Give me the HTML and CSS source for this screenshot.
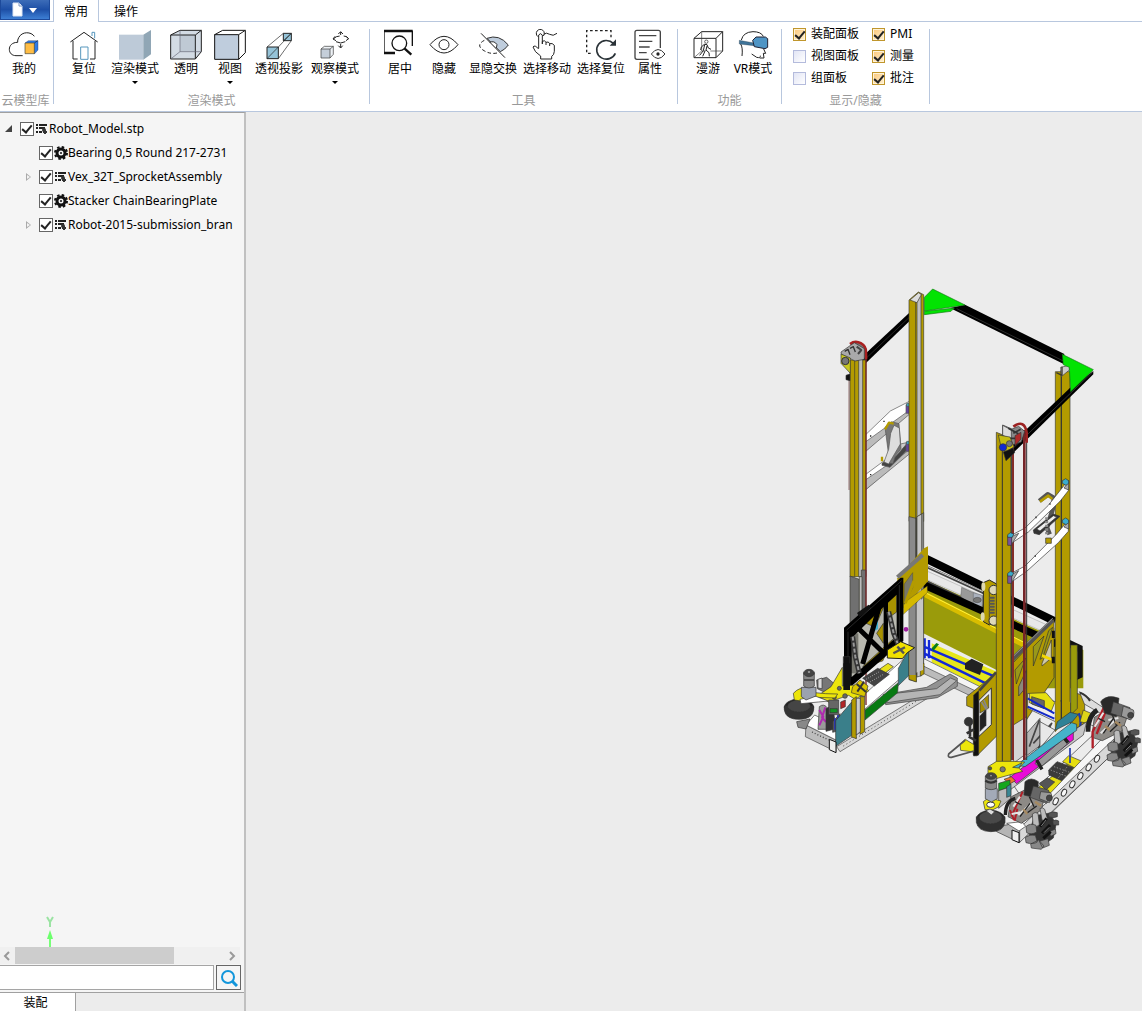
FILE: index.html
```html
<!DOCTYPE html>
<html lang="zh-CN">
<head>
    <meta charset="UTF-8">
    <meta name="viewport" content="width=device-width, initial-scale=1.0">
    <title>Robot_Model.stp</title>
    <link rel="stylesheet" href="styles.css">
</head>
<body>
    <svg class="defs" width="0" height="0" aria-hidden="true">
        <symbol id="i-asm" viewBox="0 0 12 12">
            <path d="M0 2h2M3 2h8M0 5h2M3 5h6M0 9h2M3 9h3" stroke="#222" stroke-width="2"/>
            <circle cx="8" cy="7" r="2" fill="#333"/><path d="M7 9h4M9 7v4" stroke="#333" stroke-width="2"/>
        </symbol>
        <symbol id="i-part" viewBox="0 0 28 28">
            <circle cx="14" cy="14" r="12" fill="none" stroke="#111" stroke-width="4" stroke-dasharray="5 4.425"/>
            <circle cx="14" cy="14" r="8" fill="none" stroke="#111" stroke-width="6"/>
            <circle cx="14" cy="14" r="2" fill="#111"/>
        </symbol>
    </svg>

    <header class="tabs">
        <button class="app-button" aria-label="文件">
            <svg width="30" height="16" viewBox="0 0 30 16"><path d="M1 1h6l3 3v10H1z" fill="#fff" stroke="#dde6f5"/><path d="M7 1v3h3" fill="none" stroke="#7d95c0"/><path d="M17 6h8l-4 5z" fill="#fff"/></svg>
        </button>
        <button class="tab active">常用</button>
        <button class="tab">操作</button>
    </header>

    <nav class="ribbon">
        <section class="group cloud">
            <div class="tools">
                <button class="tool">
                    <svg viewBox="0 0 96 96"><path d="M79 22C70 8 42 6 32 26q-4 7-3 14C12 40 4 50 4 61s8 19 20 19h20" class="ln"/><path d="M51 42l10-7h29v28l-11 12z" fill="#2f7be6" stroke="#223"/><path d="M51 42h28v32H51z" fill="#ffbd45" stroke="#443" stroke-width="2"/><path d="M79 42l10-7" stroke="#223" stroke-width="2"/></svg>
                    <span>我的</span>
                </button>
            </div>
            <h2>云模型库</h2>
        </section>

        <section class="group render">
            <div class="tools">
                <button class="tool">
                    <svg viewBox="0 0 96 96"><path d="M7 39L48 10l41 29M15 36v54h14M81 36v54H66" class="ln"/><path d="M38 91V54h22v37zM72 21V10h8v18" fill="none" stroke="#5797bd" stroke-width="3"/></svg>
                    <span>复位</span>
                </button>
                <button class="tool drop">
                    <svg viewBox="0 0 96 96"><path d="M0 17h73v75H0z" fill="#bdcad8"/><path d="M73 17L96 3v73L73 92z" fill="#90a6b5"/></svg>
                    <span>渲染模式</span><i class="arrow"></i>
                </button>
                <button class="tool">
                    <svg viewBox="0 0 96 96"><path d="M2 18L30 4h64v64L76 90H2z" fill="#d3dbe4"/><path d="M30 18h46v50H30z" fill="#bfc9d4"/><path d="M2 18h74v72H2zM2 18L30 4h64v64L76 90M76 18L94 4" class="ln"/><path d="M30 4v64h64M30 68L2 90" fill="none" stroke="#667" stroke-width="2"/></svg>
                    <span>透明</span>
                </button>
                <button class="tool">
                    <svg viewBox="0 0 96 96"><path d="M2 17L26 4h68v67L74 91z" fill="#fff" class="ln3"/><path d="M2 17h72v74H2z" fill="#bfcddd" stroke="#111" stroke-width="3"/><path d="M74 17L94 4" class="ln"/></svg>
                    <span>视图</span><i class="arrow"></i>
                </button>
                <button class="tool wide">
                    <svg viewBox="0 0 96 96"><path d="M61 13h24v22H61zM12 54h34v35H12z" fill="#95c3d8" stroke="#222" stroke-width="3"/><path d="M12 54l49-41M46 54l39-41M46 89l39-54M61 35l24-22M12 89l34-35" fill="none" stroke="#222" stroke-width="2"/></svg>
                    <span>透视投影</span>
                </button>
                <button class="tool wide drop">
                    <svg viewBox="0 0 96 96"><path d="M6 60l10-8h27v24L33 87z" fill="#eef2f6" stroke="#333" stroke-width="2"/><path d="M6 60h27v27H6z" fill="#c5ced9" stroke="#333" stroke-width="2"/><path d="M33 60l10-8" stroke="#333" stroke-width="2"/><path d="M58 15l7-7 7 7M65 9v9M48 22l-6 8 9 5M43 30q8-9 19-9M82 22l7 7-8 6M88 29q-7-9-14-8M58 50l7 7 6-7M65 56V45M51 38q14 8 28 0" fill="none" stroke="#222" stroke-width="3"/></svg>
                    <span>观察模式</span><i class="arrow"></i>
                </button>
            </div>
            <h2>渲染模式</h2>
        </section>

        <section class="group">
            <div class="tools">
                <button class="tool">
                    <svg viewBox="4 0 92 96"><path d="M2 74V7h85v44" fill="none" stroke="#111" stroke-width="4"/><path d="M1 6h87M2 72h33" stroke="#111" stroke-width="7"/><circle cx="48" cy="43" r="22" fill="none" stroke="#111" stroke-width="4"/><path d="M64 59l20 18" stroke="#111" stroke-width="7"/></svg>
                    <span>居中</span>
                </button>
                <button class="tool">
                    <svg viewBox="0 0 96 96"><path d="M6 47q42-50 84 0-42 50-84 0z" class="ln"/><circle cx="48" cy="47" r="15" class="ln"/></svg>
                    <span>隐藏</span>
                </button>
                <button class="tool wide">
                    <svg viewBox="0 0 96 96"><path d="M30 28q36-14 64 20-10 14-24 20z" fill="#bfcddd" stroke="#333" stroke-width="3"/><path d="M38 40q14-6 22 7l-2 10" fill="#fff" stroke="#333" stroke-width="3"/><path d="M22 34Q-4 48 18 63t46 8" fill="none" stroke="#222" stroke-width="3" stroke-dasharray="11 7"/><path d="M12 13l72 73" stroke="#222" stroke-width="3"/></svg>
                    <span>显隐交换</span>
                </button>
                <button class="tool wide">
                    <svg viewBox="0 0 96 96"><path d="M21 23a12 12 0 1 1 16-2M38 16q8-7 18 0t22-3" class="ln"/><path d="M23 58V18q5-8 11 0v27-8q7-5 11 3 8-4 11 4 8-3 14 5v18q-1 12-8 15v8H29v-9Q10 69 6 54q5-8 17 6M45 40v8M56 44v7" class="ln"/></svg>
                    <span>选择移动</span>
                </button>
                <button class="tool wide">
                    <svg viewBox="0 0 96 96"><path d="M17 73H5V5h73v22" fill="none" stroke="#222" stroke-width="4" stroke-dasharray="8 7"/><path d="M85 43A29 28 0 1 0 91 73" fill="none" stroke="#2b3338" stroke-width="5"/><path d="M93 31v19H74z" fill="#2b3338"/></svg>
                    <span>选择复位</span>
                </button>
                <button class="tool">
                    <svg viewBox="0 0 96 96"><path d="M44 91H9q-6 0-6-6V10q0-6 6-6h64q6 0 6 6v47" fill="none" stroke="#444" stroke-width="4"/><path d="M15 20h52M15 37h40M15 54h32M15 71h23" stroke="#444" stroke-width="4"/><path d="M52 75q20-27 41 0-21 27-41 0z" fill="#fff" stroke="#333" stroke-width="3"/><circle cx="72" cy="75" r="5" fill="#222"/></svg>
                    <span>属性</span>
                </button>
            </div>
            <h2>工具</h2>
        </section>

        <section class="group">
            <div class="tools">
                <button class="tool">
                    <svg viewBox="0 0 96 96"><path d="M6 28h66v58H6zM6 28L29 8h63v58L72 86M72 28L92 8" class="ln"/><path d="M29 8v58M29 66h10M55 66h37M29 66L6 86" fill="none" stroke="#444" stroke-width="2"/><circle cx="43" cy="38" r="5" class="ln thin"/><path d="M37 46l-9 8-2 9M37 46l8 1 4 10 8 4M38 47l-4 18-11 14M45 51l-3 12 9 8 1 11M40 64l-8 18" fill="none" stroke="#222" stroke-width="3"/></svg>
                    <span>漫游</span>
                </button>
                <button class="tool vr">
                    <svg viewBox="0 0 96 96"><path d="M13 33Q19 9 48 8q24 0 31 14M11 45q7 11 4 36M70 80q1 8-11 5l-15-10M80 60l6 13h-7l2 14H68" class="ln"/><path d="M7 34l44 8v8L7 45z" fill="#3f7499" stroke="#234"/><path d="M47 34l10-10h28l7 5v26l-8 4-32-6z" fill="#4f95c5" stroke="#223" stroke-width="3"/></svg>
                    <span>VR模式</span>
                </button>
            </div>
            <h2>功能</h2>
        </section>

        <section class="group panels">
            <div class="checks">
                <label><input type="checkbox" checked>装配面板</label>
                <label><input type="checkbox" checked>PMI</label>
                <label><input type="checkbox">视图面板</label>
                <label><input type="checkbox" checked>测量</label>
                <label><input type="checkbox">组面板</label>
                <label><input type="checkbox" checked>批注</label>
            </div>
            <h2>显示/隐藏</h2>
        </section>
    </nav>

    <main class="workspace">
        <aside class="sidebar">
            <div class="tree-panel">
                <ul class="tree">
                    <li>
                        <div class="row"><i class="twisty open"></i><input type="checkbox" id="n1" checked><svg><use href="#i-asm"/></svg><label for="n1">Robot_Model.stp</label></div>
                        <ul>
                            <li class="row"><i class="twisty none"></i><input type="checkbox" id="n2" checked><svg class="part"><use href="#i-part"/></svg><label for="n2">Bearing 0,5 Round 217-2731</label></li>
                            <li class="row"><i class="twisty"></i><input type="checkbox" id="n3" checked><svg><use href="#i-asm"/></svg><label for="n3">Vex_32T_SprocketAssembly</label></li>
                            <li class="row"><i class="twisty none"></i><input type="checkbox" id="n4" checked><svg class="part"><use href="#i-part"/></svg><label for="n4">Stacker ChainBearingPlate</label></li>
                            <li class="row"><i class="twisty"></i><input type="checkbox" id="n5" checked><svg><use href="#i-asm"/></svg><label for="n5">Robot-2015-submission_bran</label></li>
                        </ul>
                    </li>
                </ul>
                <svg class="triad" width="40" height="32" viewBox="0 0 40 32"><path d="M17 2l3 5 3-5M20 7v5" fill="none" stroke="#9be3a3" stroke-width="2"/><path d="M20 20v12" stroke="#7f7" stroke-width="2"/><path d="M20 15l3 9h-6z" fill="#6dff6d"/></svg>
            </div>
            <div class="hscroll">
                <svg width="15" height="17" viewBox="0 0 15 17"><path d="M9 5L5 9l4 4" fill="none" stroke="#999" stroke-width="2"/></svg>
                <span class="thumb"></span>
                <svg width="15" height="17" viewBox="0 0 15 17"><path d="M5 5l4 4-4 4" fill="none" stroke="#999" stroke-width="2"/></svg>
            </div>
            <div class="search">
                <input type="text" aria-label="搜索">
                <button aria-label="搜索"><svg width="18" height="18" viewBox="0 0 18 18"><circle cx="8" cy="8" r="6" fill="none" stroke="#1296db" stroke-width="2"/><path d="M12 12l5 5" stroke="#1296db" stroke-width="3"/></svg></button>
            </div>
            <div class="bottom-tabs"><button>装配</button></div>
        </aside>

        <section class="viewport">
            <svg class="model" width="362" height="580" viewBox="0 0 1086 1740" stroke-linejoin="round">
                <!-- top beams -->
                <g>
                    <path d="M240 236L388 98v26L240 266z"/><path d="M242 250L388 112" stroke="#777" stroke-width="1"/>
                    <path d="M510 84l45-10 298 148-2 30z"/><path d="M530 86l322 158" stroke="#888" stroke-width="1"/>
                </g>
                <!-- intake arms on the left -->
                <g stroke="#555" stroke-width="2">
                    <path d="M256 465l75-72 57-29v27L256 515z" fill="#fff"/><path d="M256 486L388 391v12L256 515z" fill="#bbb"/>
                    <path d="M256 584l132-98v28L256 630z" fill="#fff"/><path d="M256 600l132-90v12L256 630z" fill="#bbb"/>
                    <path d="M270 468h4M310 424h4M270 584h4" stroke="#222" stroke-width="4"/>
                    <path d="M306 550l82-64v18l-58 58-24-6z" fill="#444"/><path d="M318 545l30-50 36-8-54 62z" fill="#ccc"/>
                    <path d="M315 442l20-17 22 6 6 75-16 20-8 25-24-3 10-30z" fill="#777"/><path d="M332 460l10-24 16 8 3 48-35 60-14-6 14-38z" fill="#ddd"/>
                    <path d="M315 448l12-20 14 3M306 530v14" fill="none" stroke="#b39b00" stroke-width="7"/>
                    <path d="M378 374h10v26h-10zM378 488h10v26h-10z" fill="#63429d"/><path d="M380 370h8v9h-8zM380 484h8v9h-8z" fill="#3bb0d0"/>
                </g>
                <!-- back panel and cross bars -->
                <g transform="translate(0 660)">
                    <path d="M430 415l220 115v60L430 470z" fill="#eee"/>
                    <path d="M455 430l195 85v70l-195-98z" fill="#e6e619"/>
                    <path d="M432 440l218 92M432 460l218 106M434 415v60M447 420v55" fill="none" stroke="#1228d8" stroke-width="7"/>
                    <path d="M555 490l20-14 35 17-10 32-45-18z" fill="#222"/>
                    <path d="M455 445l14-16 8 4-17 20z" fill="#087c1a"/>
                    <path d="M425 235l485 215v115H760L430 400z" fill="#9a9b0b"/>
                    <path d="M434 210l390 175v25L434 236z" fill="#e8e8e8" stroke="#777"/>
                    <path d="M425 238l200 95M440 200l185 85" stroke="#444" stroke-width="9"/><path d="M440 198l180 82" stroke="#ccc" stroke-width="3"/>
                    <path d="M545 262l62 28v44l-65-44z" fill="#999" stroke="#333"/><path d="M580 278l27 8v45l-27-12z" fill="#aab1bd" stroke="#444"/><ellipse cx="592" cy="300" rx="12" ry="8" fill="#777" stroke="#222"/>
                    <path d="M430 172l395 192" stroke="#000" stroke-width="24"/>
                    <path d="M430 254l400 178" stroke="#000" stroke-width="22"/>
                    <path d="M436 284l370 188" stroke="#d9bd00" stroke-width="16"/><path d="M440 280l365 184" stroke="#fff33a" stroke-width="3"/>
                    <path d="M870 420l38 18v94l-18 8-20-10z" fill="#111"/><path d="M870 443l22 12v80h-22z" fill="#9a9b0b" stroke="#333"/>
                    <path d="M610 248l18-8 22 12v115l-22 8-18-10z" fill="#b39b00" stroke="#222" stroke-width="3"/><path d="M628 268v105" stroke="#222" stroke-width="2"/>
                    <circle cx="641" cy="270" r="14" fill="#ded8b8" stroke="#333" stroke-width="3"/><circle cx="641" cy="362" r="14" fill="#ded8b8" stroke="#333" stroke-width="3"/><ellipse cx="610" cy="260" rx="6" ry="13" fill="#ddd8b0"/><ellipse cx="608" cy="350" rx="6" ry="13" fill="#ddd8b0"/>
                    <path d="M636 290v52" stroke="#555" stroke-width="16" stroke-dasharray="6 3"/>
                </g>
                <!-- left and rear base rails -->
                <g transform="translate(0 1110)" stroke="#444" stroke-width="2">
                    <path d="M430 25l220 110v30L430 50z" fill="#f4f4f4"/><path d="M430 48l220 105v22L430 70z" fill="#bbb"/>
                    <path d="M170 290l310-190 20 10-320 195z" fill="#d8d8d8"/><path d="M190 288l285-175" stroke-dasharray="3 8" stroke-width="3"/>
                    <path d="M310 134l130-22 70-40 22 12v25l-60 34-155 21z" fill="#929292"/><path d="M310 134l160-18 42-32 18 8-50 42-165 25z" fill="#b5b5b5"/>
                    <path d="M190 190l200-180v50L240 190z" fill="#fff"/><path d="M255 180l100-82-2 30-98 82z" fill="#087a12"/><path d="M355 55l33-58v78l-33 32z" fill="#3a7f8a"/>
                    <path d="M78 225l90 45v35l-92-45z" fill="#bdbdbd"/><path d="M78 225l26-30 92 45-28 30z" fill="#fff"/><path d="M96 246l50 24" stroke-dasharray="3 6" stroke-width="4"/>
                </g>
                <!-- lift posts -->
                <g stroke="#3b3b30" stroke-width="2">
                    <path d="M210 240h48v650h-48z" fill="#b39b00"/><path d="M236 240l12-10v660h-12z" fill="#bbb"/><path d="M210 888l28 10v180h-28zM244 870h14v210h-14z" fill="#707070"/><path d="M238 890h8v190h-8z" fill="#bbb"/><path d="M224 240v650" />
                    <path d="M258 225v1050" stroke="#762528" stroke-width="4"/><path d="M207 300v330" stroke="#633" stroke-width="2"/>
                    <path d="M387 60l28-24 16 8v680H387z" fill="#b39b00"/><path d="M411 66l12-24v670h-12z" fill="#bfbfbf"/><path d="M390 60l26-22 8 6-13 24z" fill="#ddd"/>
                    <path d="M387 710l22 5v490l-22-6zM409 712l22-14v480l-22 12z" fill="#8a8a8a"/><path d="M411 710l14-8v485l-14 4z" fill="#c6c6c6"/><path d="M387 1100l22 8v98l-22-8zM421 1150h11v32l-11 6z" fill="#b39b00"/><path d="M407 66v1080" />
                    <path d="M826 275h44v1015l-44 65z" fill="#b39b00"/><path d="M844 270v1060" stroke-width="4"/><path d="M842 262l26-6v14l-24 20z" fill="#ccc"/><path d="M829 278l17 8v-26" fill="none" stroke-width="4"/>
                </g>
                <!-- left tower head -->
                <g transform="translate(150 0)" stroke="#333" stroke-width="2">
                    <path d="M60 192a30 30 0 0 1 48 26v20" fill="#777" stroke="#a92020" stroke-width="8"/>
                    <path d="M33 216l40-28 30 18v32l-28 5-41-20z" fill="#aaa"/><path d="M44 214l10-6 6 16M60 205l10-5 6 16" fill="none" stroke-width="4"/><path d="M80 200l14 10-10 12" fill="none" stroke="#444" stroke-width="6"/>
                    <path d="M33 222l28 12v46l-28-30z" fill="#c8c820"/><circle cx="46" cy="243" r="11" fill="#777" stroke-width="3"/><path d="M48 286l12-4v20l-12-3z" fill="#111"/>
                </g>
                <!-- green corner plates -->
                <g transform="translate(150 0)" stroke="#147a14" stroke-width="2" fill="#02e302">
                    <path d="M283 52l25-25 97 48-122 18z"/><path d="M283 94l90-10-10 10-80 10z"/>
                    <path d="M719 325L520 514l8 26L790 283v-10z" fill="#000" stroke="none"/><path d="M528 525L788 276" stroke="#999" stroke-width="1"/>
                    <path d="M697 223l93 46-68 66-4-73-18-8z"/>
                </g>
                <!-- left black gate and its linkage -->
                <g transform="translate(0 660)">
                    <path d="M352 235l80-90 12-6v105l-92 100z" fill="#b39b00"/><path d="M370 310l72-52v20l-72 65z" fill="#d5b900" stroke="#333"/>
                    <path d="M373 252l25-34v45l-25 50z" fill="#77776b" stroke="#333"/><path d="M376 310l26-68" stroke="#b39b00" stroke-width="9"/>
                    <path d="M352 232l76-67" stroke="#777" stroke-width="12"/>
                    <path d="M388 330l20-20v215h-20z" fill="#8a8a8a"/><path d="M409 310l20-15v215l-20 8z" fill="#c6c6c6"/><path d="M408 310v215" stroke="#333" stroke-width="2"/>
                    <path d="M205 400l155-130v160L210 560z" fill="#b9b9b0"/><path d="M210 400h25v120h-25z" fill="#77776f"/>
                    <path d="M248 365l65-48-28 65zM248 500l90-82-30 65zM290 400l20-30v60zM322 300l28-24v60l-28 20z" fill="#a89200" stroke="#333" stroke-width="2"/>
                    <path d="M280 395l14-34v26z" fill="#42b2d2"/>
                    <path d="M192 383l170-150h8v190L215 558l-4 25h-19zM215 414v117l96-84V320zM324 308v126l26-24V284z" fill-rule="evenodd"/>
                    <path d="M235 385l82 80M248 492l50-172" fill="none" stroke="#000" stroke-width="15"/><path d="M235 345l35-25" stroke="#111" stroke-width="14"/>
                    <path d="M200 390l165-148M204 395v180M358 255v165" fill="none" stroke="#777" stroke-width="1"/>
                    <path d="M326 335l15 65 18 45M218 410l8 60 12 50" fill="none" stroke="#333" stroke-width="15"/><path d="M326 335l15 65 18 45M218 410l8 60 12 50" fill="none" stroke="#999" stroke-width="6" stroke-dasharray="12 6"/>
                    <path d="M322 450l40-25 42 18-22 15-15 18-45-2z" fill="#f0e000" stroke="#222" stroke-width="3"/><path d="M340 460l35-18M352 440l20 20" stroke="#555" stroke-width="7"/>
                    <circle cx="378" cy="388" r="7" fill="#a020a0"/>
                </g>
                <!-- left drive pod -->
                <g transform="translate(0 1110)" stroke="#333" stroke-width="2">
                    <path d="M292 62l32-22 16 10-32 25z" fill="#e7e016"/><path d="M248 85l45-30 35 18-45 35z" fill="#444"/><path d="M258 88l42-24M270 96l42-24" stroke="#ccc" stroke-dasharray="3 4"/>
                    <path d="M110 90l30-8 24 20-24 28-28-14z" fill="#777"/><path d="M114 88l12-4v32l-12-2z" fill="#ddd"/>
                    <path d="M190 20h20v100h-20z" fill="#111"/>
                    <path d="M153 110l34-58v56l65-5 14 20-40 25-20-12-60 20-34-18z" fill="#ece50b"/>
                    <path d="M190 40h20v80h-20z" fill="#111" stroke="none"/>
                    <circle cx="178" cy="115" r="6" fill="#666"/><circle cx="195" cy="138" r="7" fill="#666"/><circle cx="163" cy="142" r="6" fill="#666"/>
                    <path d="M218 110l22-20 24 18-10 32-40-12z" fill="#d9c400"/><path d="M230 102l28 24M232 125l20-30" stroke-width="6"/>
                    <path d="M118 170q14-12 26 6v62h-30z" fill="#9a9a9a"/><path d="M118 180l12 20-12 26M136 172l-10 30 12 14" fill="none" stroke="#b02ab0" stroke-width="6"/><path d="M138 176l20-10 10 70-30 8z" fill="#333"/><path d="M146 150h30v44h-30z" fill="#666"/><path d="M182 156l14-6v20l-14 6z" fill="#b32626"/><path d="M150 176h22v12h-22z" fill="#119222"/><path d="M158 215l22-24v50l-22 6z" fill="#555"/><path d="M165 205v34M174 195v30" stroke="#2433bd" stroke-width="5"/>
                    <path d="M167 212l48-56v100l-48 33z" fill="#3a7f8a"/><path d="M215 150l14-10v126l-14-5zM240 140h14v105l-14 8z" fill="#b39b00"/><path d="M229 145h12v100l-12 10z" fill="#ccc"/>
                    <path d="M148 268l20 8v32l-20-9z" fill="#eee" stroke="#111" stroke-width="3"/>
                    <path d="M50 215l40-8-12 30-24-5z" fill="#888"/>
                    <ellipse cx="57" cy="172" rx="44" ry="25" fill="#222"/><path d="M13 168v12q4 28 44 28t44-28v-12z" fill="#333"/><ellipse cx="57" cy="168" rx="34" ry="18" fill="#454545" stroke-dasharray="4 4"/>
                    <path d="M40 130q20-22 45-14l20 12q30 4 68 4l-8 12-58-2-24 14-40-6z" fill="#ece50b"/><path d="M60 148l45-10 40 15-30 3-52 5z" fill="#fff"/>
                    <path d="M64 112h44v26l-30 12-14-10z" fill="#9ba2af"/><path d="M71 68h32v40q-16 12-32 0z" fill="#888"/><ellipse cx="87" cy="69" rx="16" ry="11" fill="#444"/><circle cx="87" cy="66" r="4" fill="#ccc"/>
                    <path d="M72 90h30" stroke-width="4"/>
                </g>
                <!-- right middle frame -->
                <g transform="translate(0 660)" stroke="#333" stroke-width="2">
                    <path d="M700 488l122-130v175L700 720z" fill="#b39b00"/>
                    <path d="M760 440l32-32-32 90zM806 392l12-10-30 92-8 4z" fill="#99981a"/><path d="M786 490l28-70v54l-28 24z" fill="#cfc9a8"/><path d="M786 462l28 12v8l-28-10z" fill="#f2d800" stroke="none"/>
                    <path d="M705 510l32-36-28 78z" fill="#99981a"/><path d="M716 560l22-48v50l-22 26z" fill="#8a8a7a"/>
                    <path d="M697 478l122-118" stroke="#555" stroke-width="13"/><path d="M697 472l122-118" stroke="#aaa"/><path d="M820 392v22M820 470v20" stroke="#111" stroke-width="9"/>
                </g>
                <g transform="translate(0 1110)" stroke="#333" stroke-width="2">
                    <path d="M743 130l83 25v60l-83-40z" fill="#f0eeee"/><path d="M748 130l50-2 26 30-10 25-66-25z" fill="#e5df10"/><path d="M755 140l38 12v24l-38-14z" fill="#666"/><path d="M743 145l80 45M743 170l80 36" stroke="#1228c8" stroke-width="6"/>
                    <path d="M560 140l90-72v190l-60 60-10-3V175l-20-8z" fill="#b39b00"/><path d="M596 152l38-38v110l-38 36z" fill="#e9e9e9" stroke-width="3"/><path d="M600 158l26-24v40l-26 15z" fill="#a28c00"/><path d="M600 198l18-20v48l-18 18z" fill="#222"/><path d="M612 150l10 26M605 156l15 24" stroke="#888" stroke-width="5"/>
                    <path d="M581 135l15-13v193l-15 3z" fill="#111"/><path d="M598 122l50-55" stroke="#444" stroke-width="8"/>
                    <circle cx="566" cy="215" r="13" fill="#333"/><path d="M570 210v48M560 250l22-12M566 260l22 12" stroke-width="8"/>
                    <path d="M540 282l16-14 26 16v22l-40-5z" fill="#ece50b"/><path d="M556 270l-50 42q-4 11 8 10l68-19" fill="none" stroke="#555" stroke-width="5"/>
                    <path d="M700 225l40-25v110l-40 30z" fill="#d5d5d5"/><path d="M740 250l40-45v82l-40 30z" fill="#b5b5b5"/><path d="M748 290l30-80M760 280l55-60-40 75" fill="none" stroke="#444" stroke-width="5"/><path d="M780 215l45 25-45 55z" fill="#e8e8e8"/>
                    <path d="M872 160l20-30 22 10v80l-42 25z" fill="#b39b00"/><path d="M872 -15h20v190l-20 20z" fill="#9a9b0b"/><path d="M826 155h44v35l-44 55z" fill="#b39b00" stroke="none"/><path d="M844 150v75" stroke-width="4"/>
                    <path d="M832 215l38-28 25 6-18 22-52 26z" fill="#2f8296"/>
                    <path d="M896 190q12 25 0 60" fill="none" stroke="#2038ad" stroke-width="7"/>
                    <path d="M898 125l75 50v22l-60-35z" fill="#ddd"/><path d="M900 128q20 8 30 25" fill="none" stroke-width="6"/><path d="M910 180l35 15-25 25-20-5z" fill="#ddd518"/>
                </g>
                <!-- right base rails -->
                <g transform="translate(0 1110)" stroke="#333" stroke-width="2">
                    <path d="M690 390l230-170 40 15-230 215z" fill="#efefef"/><path d="M690 370l230-155-10 40-220 165z" fill="#c6c6c6"/>
                    <path d="M735 445l130-105 35 15-120 125z" fill="#e6df10"/><path d="M848 335l18-18 38 16-18 22z" fill="#e6df10"/>
                    <path d="M806 360l25-25 50 18-34 40-40-18z" fill="#3b3b3b"/><path d="M812 360l50 20M822 350l50 18M830 390l32-40" stroke="#bbb" stroke-dasharray="4 5"/>
                    <path d="M778 400l24-16 22 12-26 24z" fill="#555"/><path d="M870 294v45" stroke="#2038ad" stroke-width="5"/>
                    <path d="M720 525L1005 225l20 20v40L740 560z" fill="#f6f6f6"/><path d="M718 535L1020 250v40L718 578z" fill="#d8d8d8"/>
                    <g fill="#f8f8f8" stroke-width="3"><ellipse cx="827" cy="454" rx="7" ry="11" transform="rotate(25 827 454)"/><ellipse cx="852" cy="428" rx="7" ry="11" transform="rotate(25 852 428)"/><ellipse cx="877" cy="403" rx="7" ry="11" transform="rotate(25 877 403)"/><ellipse cx="901" cy="378" rx="7" ry="11" transform="rotate(25 901 378)"/><ellipse cx="926" cy="352" rx="7" ry="11" transform="rotate(25 926 352)"/><ellipse cx="951" cy="326" rx="7" ry="11" transform="rotate(25 951 326)"/></g>
                    <path d="M650 530l45-8 24 18v38l-69-33z" fill="#b5b5b5"/><path d="M680 520l45-5 12 14-20 14z" fill="#fff"/><path d="M696 540l21 8v30l-21-9z" fill="#eee" stroke="#111" stroke-width="3"/>
                    <path d="M690 382L868 245h12v24l-170 132z" fill="#ea0bd8"/><path d="M765 340l90-78 14 14-90 78z" fill="#999"/><path d="M770 330l16 28M846 256l18 22" stroke="#222" stroke-width="10"/>
                    <path d="M710 345l165-127 15 5v18L735 350z" fill="#45b4ca"/><path d="M672 388l22-8 12 12-15 9z" fill="#ed7626"/>
                </g>
                <!-- front right post, chain and arms -->
                <g stroke="#333" stroke-width="2">
                    <path d="M649 457l20 8 24 10v975h-44z" fill="#b39b00"/><path d="M667 465v985" stroke-width="3"/><path d="M699 490v950" stroke="#842d29" stroke-width="6"/><path d="M694 490v950" stroke-width="3"/>
                    <path d="M778 663l25-20 18 10v25l-20 65 8 20" fill="none" stroke="#555" stroke-width="14"/><path d="M780 665l25-18 12 10" stroke="#b39b00" stroke-width="8" fill="none"/>
                    <path d="M760 750l60-48 20 7-62 55-16-4z" fill="#333"/><path d="M770 747l50-40 10 4-50 42z" fill="#eee"/>
                    <g fill="#fff"><path d="M694 766l41-22 70-68 60-76v32l-25 32-95 92-51 34z"/><path d="M694 880l41-22 95-96 35-42v34l-30 34-95 86-46 32z"/></g>
                    <path d="M694 770l22-10-22 34zM694 884l22-12-22 36zM866 605v25l-14-6zM866 722v25l-14-6z" fill="#aaa"/>
                    <path d="M800 712v55" stroke="#888" stroke-width="9" stroke-dasharray="7 4"/><path d="M797 774h17v16h-17z" fill="#b39b00"/>
                    <path d="M683 768h12v28h-12zM683 884h12v26h-12z" fill="#7853a0"/><path d="M683 764l8-6 10 4-4 10h-14zM683 880l8-6 10 4-4 10h-14zM847 602l10-6 9 6v8l-8 6-11-6zM847 720l10-6 9 6v8l-8 6-11-6z" fill="#3aacce"/>
                    <path d="M766 712h4M764 828h4M808 672h4" stroke-width="5"/>
                    <path d="M740 455v985" stroke="#333" stroke-width="3"/><path d="M733 450v990" stroke="#762528" stroke-width="8"/>
                    <path d="M700 440q34-24 40 18v30" fill="none" stroke="#9c2222" stroke-width="8"/>
                    <path d="M668 435l28 12 20-8 18 15-10 32-45 15-11-10z" fill="#888"/><path d="M668 436l26 14v28l-26-12z" fill="#ddd"/><path d="M685 445l30 16M700 460l22-12M688 475h30" stroke-width="5"/><path d="M705 467l18-10v20l-18 20z" fill="#b02a2a"/>
                    <path d="M655 465l35 6 12 30-25 15-13-12z" fill="#c4bc12"/><circle cx="688" cy="491" r="9" fill="#777"/><circle cx="669" cy="502" r="11" fill="#1228d2"/>
                    <path d="M670 516l30-12 4 14-26 24z" fill="#111"/>
                </g>
                <!-- front wheels, motors -->
                <g transform="translate(0 1110)" stroke="#333" stroke-width="2">
                    <path d="M624 350l26-16h52l32 2-18 18 12 10-80 22-24-8z" fill="#ece50b"/><circle cx="668" cy="358" r="8" fill="#777"/><circle cx="630" cy="355" r="5" fill="#555"/><path d="M698 352l28-14-10 16z" fill="#45b4ca"/>
                    <path d="M656 400l34-10v20l-34 14z" fill="#14a61e"/><path d="M656 422l36-12v35l-36 30z" fill="#bbb"/><path d="M680 410l13-8v35l-13 5z" fill="#3a8794"/>
                    <path d="M684 500l10-60 60-30 40 30-10 40-60 40z" fill="#8d8a86"/>
                    <path d="M694 500l34-75M704 512l8-36M690 480l12 30" fill="none" stroke="#b01f28" stroke-width="6"/><path d="M700 470l20-30M715 495l40-35M695 492l26-5M735 430l30 10" stroke="#e5e5e5" stroke-width="6"/>
                    <path d="M720 500l30-40M740 490l30-22M705 455l20 10M748 440l14 30" fill="none" stroke="#222" stroke-width="4"/><path d="M765 455l18 12M730 478l12 14" stroke="#a68a62" stroke-width="7"/>
                    <path d="M676 495q0-42 30-50" fill="none" stroke="#222" stroke-width="10"/><path d="M735 395q18-16 40 0l-3 50-40-10z" fill="#292929"/><path d="M760 408l45 12 10 22-15 18-50-18z" fill="#666"/><path d="M782 425l30 3q8 12-4 30l-30-12z" fill="#999"/><circle cx="808" cy="444" r="9" fill="#444"/>
                    <path d="M935 262l8-60 50-30 48 30-14 40-60 30z" fill="#8d8a86"/>
                    <path d="M938 295v-50l36-78M950 252l26-66" fill="none" stroke="#b01f28" stroke-width="7"/><path d="M944 230l26-42M962 250l44-40M985 210l30-6" stroke="#e5e5e5" stroke-width="6"/><path d="M970 250l30-45M990 245l30-28M955 205l20 10M995 190l14 35" stroke="#222" stroke-width="4"/><path d="M1005 215l18 12M975 228l14 12" stroke="#a68a62" stroke-width="7"/>
                    <path d="M924 245q0-48 28-65" fill="none" stroke="#222" stroke-width="14"/>
                    <path d="M962 155q20-24 55-10l-8 55-34-10z" fill="#292929"/><path d="M1000 155l50 18v35l-58-18z" fill="#666"/><path d="M1030 168l30 12q6 14-8 30l-28-12z" fill="#999"/><circle cx="1052" cy="196" r="9" fill="#444"/>
                    <ellipse cx="632" cy="505" rx="42" ry="24" fill="#222"/><path d="M589 500v17q5 27 43 28t43-28v-17z" fill="#303030"/><ellipse cx="632" cy="502" rx="34" ry="19" fill="#494949" stroke-dasharray="5 4"/>
                    <path d="M610 455l16-12 37 10-8 18-16 8h-24z" fill="#ece50b"/><ellipse cx="632" cy="464" rx="12" ry="8" fill="#fff" stroke-width="3"/><path d="M618 482l12-5 14 8-10 10z" fill="#ddd"/>
                    <path d="M616 416h36v30l-18 10-18-10z" fill="#a3aab8"/><path d="M616 378h34v36q-16 10-34 0z" fill="#888"/><path d="M616 392q17 12 34 0" fill="none" stroke-width="7"/><ellipse cx="633" cy="378" rx="16" ry="10" fill="#444"/><circle cx="633" cy="377" r="3" fill="#ddd"/>
                </g>
                <g id="mecanum" transform="translate(0 1110)" stroke="#333" stroke-width="2">
                    <path d="M748 545l16-48 46-8 18 35-8 40-35 25-35-14z" fill="#333"/>
                    <g fill="#bbb"><path d="M757 492q8-8 17-2l4 34q-8 10-19 4zM780 476q8-6 14 2l8 28q-8 10-16 4z"/></g>
                    <g fill="#888"><path d="M738 530q12-12 30-4l2 20q-16 10-30 2zM736 562q14-10 30-6l6 20q-12 8-34 2zM752 582l24-12 16 18-8 10-30-4zM778 574l26-8 4 20-20 8zM808 545l18-8 2 14-16 8z"/></g>
                    <g fill="#555"><path d="M806 490q12-8 26-2v12q-14 6-26 0zM818 513q10-6 18 0v12h-16z"/></g>
                    <path d="M780 530l20-25M786 550l24-25M790 565l22-20" stroke="#111" stroke-width="9"/><path d="M784 528l14-18M792 548l16-16" stroke="#777" stroke-width="3"/>
                </g>
                <use href="#mecanum" x="245" y="-247"/>
            </svg>
        </section>
    </main>
</body>
</html>
```

FILE: styles.css
```css
* {
    box-sizing: border-box;
}
body {
    margin: 0;
    height: 100vh;
    display: flex;
    flex-direction: column;
    overflow: hidden;
    font-family: "Noto Sans", "Noto Sans CJK SC", sans-serif;
    font-size: 12px;
    line-height: 16px;
    color: #000;
    background: #fff;
}
button {
    font: inherit;
    color: inherit;
    border: 0;
    padding: 0;
    background: none;
}
input {
    margin: 0;
}
ul {
    list-style: none;
    margin: 0;
    padding: 0;
}
.defs {
    position: absolute;
}

/* tab strip */
.tabs {
    display: flex;
    height: 22px;
    flex: none;
    border-bottom: 1px solid #b8c7de;
}
.app-button {
    width: 50px;
    height: 20px;
    margin-right: 3px;
    border: 1px solid #1d4a9b;
    border-top: 0;
    background: linear-gradient(#3c6cb8, #1d4fa6 50%, #3d7fd4);
}
.app-button svg {
    display: block;
    margin-left: 11px;
}
.tab {
    width: 46px;
    height: 22px;
    margin-right: 4px;
    padding-top: 2px;
}
.tab.active {
    border: 1px solid #b8c7de;
    border-width: 0 1px;
    background: #fff;
}

/* ribbon */
.ribbon {
    display: flex;
    flex: none;
    height: 90px;
    padding: 7px 0;
    border-bottom: 1px solid #b8c7de;
}
.group {
    display: flex;
    flex-direction: column;
    justify-content: space-between;
    padding: 0 5px 0 8px;
    border-right: 1px solid #b8c7de;
}
.group h2 {
    margin: 0 -5px -3px -8px;
    font-size: 12px;
    font-weight: normal;
    line-height: 12px;
    text-align: center;
    white-space: nowrap;
    color: #999;
}
.group.cloud {
    width: 54px;
    padding: 0 0 0 2px;
}
.group.cloud h2 {
    margin: 0 2px -3px -2px;
}
.tools {
    display: flex;
    align-items: flex-start;
}
.tool {
    width: 44px;
    display: flex;
    flex-direction: column;
    align-items: center;
    white-space: nowrap;
}
.tool svg {
    width: 32px;
    height: 32px;
}
.tool.wide {
    width: 54px;
}
.render .drop {
    width: 58px;
}
.tool.vr {
    width: 46px;
}
.arrow {
    margin-top: 4px;
    border: 3px solid transparent;
    border-top-color: #000;
    border-bottom: 0;
}
.ln {
    fill: none;
    stroke: #222;
    stroke-width: 3;
}
.ln3 {
    stroke: #111;
    stroke-width: 3;
}
.thin {
    stroke-width: 2;
}
.group.panels {
    width: 148px;
    padding: 0 0 0 11px;
}
.panels h2 {
    margin: 0 0 -3px -11px;
}
.checks {
    display: grid;
    grid-template-columns: 79px 1fr;
    grid-auto-rows: 22px;
    margin-top: -6px;
}
.checks label {
    display: flex;
    align-items: center;
    gap: 5px;
    white-space: nowrap;
}

/* tick boxes */
input[type="checkbox"] {
    appearance: none;
    flex: none;
    width: 13px;
    height: 13px;
    border: 1px solid #b4bbdc;
    background: linear-gradient(135deg, #e2e5f5, #fff);
    display: grid;
    place-items: center;
}
.checks input:checked {
    border-color: #c0962c;
    background: linear-gradient(135deg, #fbc779, #fff0cf);
    box-shadow: inset 0 0 0 1px #fff3d8;
}
input[type="checkbox"]:checked::after {
    content: "";
    width: 4px;
    height: 8px;
    margin-bottom: 2px;
    border: solid #222;
    border-width: 0 2px 2px 0;
    transform: rotate(40deg);
}

/* workspace */
.workspace {
    flex: 1;
    min-height: 0;
    display: grid;
    grid-template-columns: 246px 1fr;
    background: #ececec;
}
.sidebar {
    display: flex;
    flex-direction: column;
    min-height: 0;
    border-top: 1px solid #a0a0a0;
    border-right: 2px solid #c0c0c0;
    background: #f5f5f5;
}
.tree-panel {
    position: relative;
    flex: 1;
    min-height: 0;
    margin-right: 4px;
    padding-top: 4px;
    overflow: hidden;
}
.row {
    display: flex;
    align-items: center;
    height: 24px;
    padding-left: 5px;
    white-space: nowrap;
}
.tree ul .row {
    padding-left: 24px;
}
.row input[type="checkbox"] {
    width: 14px;
    height: 14px;
    margin-right: 2px;
    border-color: #666;
    background: #fff;
}
.row svg {
    flex: none;
    width: 12px;
    height: 12px;
    margin-right: 1px;
}
.row svg.part {
    width: 14px;
    height: 14px;
    margin: 0 0 0 -1px;
}
.twisty {
    flex: none;
    width: 15px;
    height: 8px;
}
.twisty::before {
    content: "";
    display: block;
    width: 5px;
    height: 8px;
    margin-left: 2px;
    background: #aaa;
    clip-path: polygon(0 0, 100% 50%, 0 100%, 0 0, 1px 2px, 1px 6px, 4px 4px, 1px 2px);
}
.twisty.open::before {
    width: 7px;
    height: 7px;
    margin-left: 0;
    background: #444;
    clip-path: polygon(100% 0, 100% 100%, 0 100%);
}
.twisty.none::before {
    display: none;
}
.triad {
    position: absolute;
    left: 30px;
    bottom: 0;
}
.hscroll {
    display: flex;
    flex: none;
    height: 17px;
    margin-right: 4px;
    background: #f0f0f0;
}
.hscroll .thumb {
    width: 159px;
    margin-right: auto;
    background: #cdcdcd;
}
.search {
    display: flex;
    flex: none;
    gap: 2px;
    height: 29px;
    padding: 1px 3px 2px 0;
    border-bottom: 1px solid #a0a0a0;
}
.search input {
    flex: 1;
    min-width: 0;
    border: 1px solid #a5a5a5;
    border-left: 0;
    background: #fff;
}
.search button {
    display: grid;
    place-items: center;
    width: 25px;
    border: 1px solid #666;
}
.bottom-tabs {
    flex: none;
    height: 18px;
    background: #ececec;
}
.bottom-tabs button {
    display: block;
    width: 76px;
    height: 18px;
    padding: 2px 4px 0 0;
    border-right: 1px solid #a0a0a0;
    background: #fff;
}
.viewport {
    display: flex;
    justify-content: flex-end;
    align-items: flex-start;
    min-width: 0;
    overflow: hidden;
    padding-top: 168px;
}
.model {
    flex: none;
}
```
